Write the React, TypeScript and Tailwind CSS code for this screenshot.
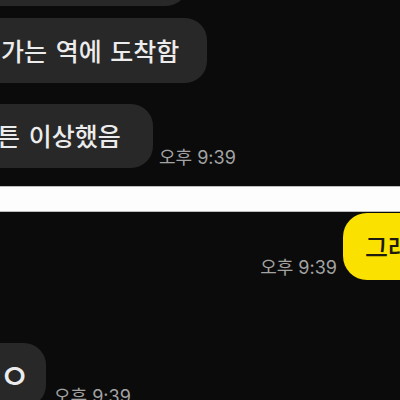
export default function App() {
  const time =
    "font-['Inter','Noto_Sans_CJK_KR',sans-serif] text-[18px] leading-[20px] text-[#a3a3a3] whitespace-nowrap";
  return (
    <div className="w-[400px] h-[400px] overflow-hidden bg-[#0b0b0b] flex flex-col font-['Noto_Sans_CJK_KR',sans-serif]">
      <div className="h-[186px] shrink-0 flex flex-col items-start">
        <div className="-mt-[58px] -ml-[20px] w-[208px] h-[64px] shrink-0 rounded-[22px] bg-[#282828]" />
        <div className="mt-[12px] -ml-[20px] w-[227px] h-[65px] shrink-0 rounded-[22px] bg-[#282828] flex items-center pl-[21px] text-[25px] font-medium text-[#ececec] whitespace-nowrap [word-spacing:3px]">
          가는 역에 도착함
        </div>
        <div className="mt-[21px] flex items-end gap-[6px]">
          <div className="-ml-[64px] w-[217px] h-[64px] shrink-0 rounded-[22px] bg-[#282828] flex items-center pl-[15px] text-[25px] font-medium text-[#ececec] whitespace-nowrap [word-spacing:3px]">
            아무튼 이상했음
          </div>
          <span className={time}>오후 9:39</span>
        </div>
      </div>
      <div className="h-[26px] shrink-0 bg-[#fdfdfd] border-y border-[#bdbdbd]" />
      <div className="flex-1 flex flex-col">
        <div className="mt-[1px] flex justify-end items-end gap-[6px]">
          <span className={time + " mb-[2px]"}>오후 9:39</span>
          <div className="-mr-[63px] w-[120px] h-[67px] shrink-0 rounded-[24px] bg-[#fae100] flex items-center pl-[22px] text-[25px] font-medium text-[#1d1b10] whitespace-nowrap">
            그래
          </div>
        </div>
        <div className="mt-[63px] flex items-end gap-[8px]">
          <div className="-ml-[30px] w-[76px] h-[64px] shrink-0 rounded-[22px] bg-[#282828] flex items-center pl-[29px] text-[34px] leading-[40px] font-medium text-[#ececec]">
            ㅇ
          </div>
          <span className={time}>오후 9:39</span>
        </div>
      </div>
    </div>
  );
}
